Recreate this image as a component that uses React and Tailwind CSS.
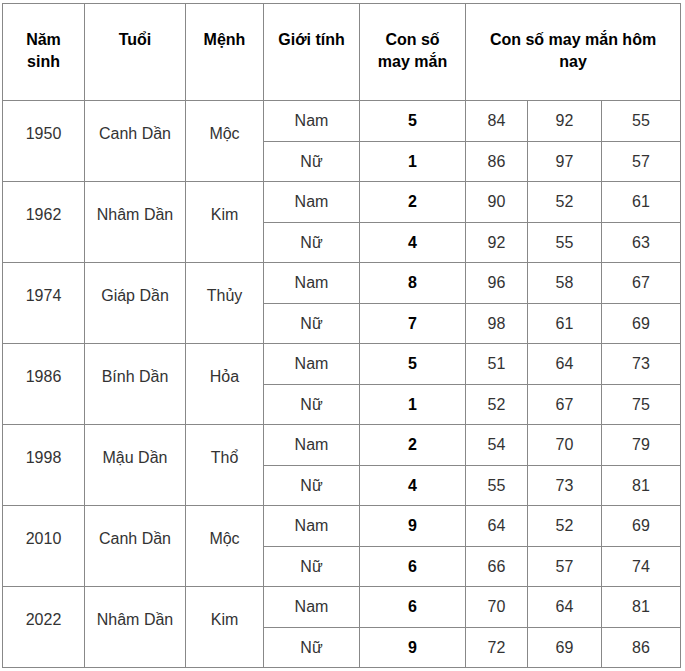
import React from 'react';

const rows = [
  { year: '1950', tuoi: 'Canh Dần', menh: 'Mộc', nam: ['5', '84', '92', '55'], nu: ['1', '86', '97', '57'] },
  { year: '1962', tuoi: 'Nhâm Dần', menh: 'Kim', nam: ['2', '90', '52', '61'], nu: ['4', '92', '55', '63'] },
  { year: '1974', tuoi: 'Giáp Dần', menh: 'Thủy', nam: ['8', '96', '58', '67'], nu: ['7', '98', '61', '69'] },
  { year: '1986', tuoi: 'Bính Dần', menh: 'Hỏa', nam: ['5', '51', '64', '73'], nu: ['1', '52', '67', '75'] },
  { year: '1998', tuoi: 'Mậu Dần', menh: 'Thổ', nam: ['2', '54', '70', '79'], nu: ['4', '55', '73', '81'] },
  { year: '2010', tuoi: 'Canh Dần', menh: 'Mộc', nam: ['9', '64', '52', '69'], nu: ['6', '66', '57', '74'] },
  { year: '2022', tuoi: 'Nhâm Dần', menh: 'Kim', nam: ['6', '70', '64', '81'], nu: ['9', '72', '69', '86'] },
];

const cell = 'border border-[#888] text-center align-middle p-0';
const head = 'border border-[#888] text-center align-top pt-[25px] font-bold text-black';

const Numbers = ({ nums }) => (
  <>
    <td className={`${cell} font-bold text-black`}>{nums[0]}</td>
    <td className={cell}>{nums[1]}</td>
    <td className={cell}>{nums[2]}</td>
    <td className={cell}>{nums[3]}</td>
  </>
);

export default function App() {
  return (
    <div className="bg-white w-[685px] h-[671px] pl-[2px] pt-[3px]">
      <table
        className="table-fixed border-collapse w-[678px] text-[16px] leading-[22px] text-[#333]"
        style={{ fontFamily: '"Liberation Sans", Arial, sans-serif' }}
      >
        <colgroup>
          <col className="w-[82px]" />
          <col className="w-[101px]" />
          <col className="w-[78px]" />
          <col className="w-[96px]" />
          <col className="w-[106px]" />
          <col className="w-[62px]" />
          <col className="w-[74px]" />
          <col className="w-[79px]" />
        </colgroup>
        <thead>
          <tr className="h-[97px]">
            <th className={`${head} px-2`}>Năm sinh</th>
            <th className={`${head} px-2`}>Tuổi</th>
            <th className={`${head} px-2`}>Mệnh</th>
            <th className={`${head} px-2`}>Giới tính</th>
            <th className={`${head} px-2`}>Con số may mắn</th>
            <th className={`${head} px-[12px]`} colSpan={3}>Con số may mắn hôm nay</th>
          </tr>
        </thead>
        <tbody>
          {rows.map((r) => (
            <React.Fragment key={r.year}>
              <tr className="h-[41px]">
                <td className={`${cell} pb-[15px]`} rowSpan={2}>{r.year}</td>
                <td className={`${cell} pb-[15px]`} rowSpan={2}>{r.tuoi}</td>
                <td className={`${cell} pb-[15px]`} rowSpan={2}>{r.menh}</td>
                <td className={cell}>Nam</td>
                <Numbers nums={r.nam} />
              </tr>
              <tr className="h-[40px]">
                <td className={cell}>Nữ</td>
                <Numbers nums={r.nu} />
              </tr>
            </React.Fragment>
          ))}
        </tbody>
      </table>
    </div>
  );
}
